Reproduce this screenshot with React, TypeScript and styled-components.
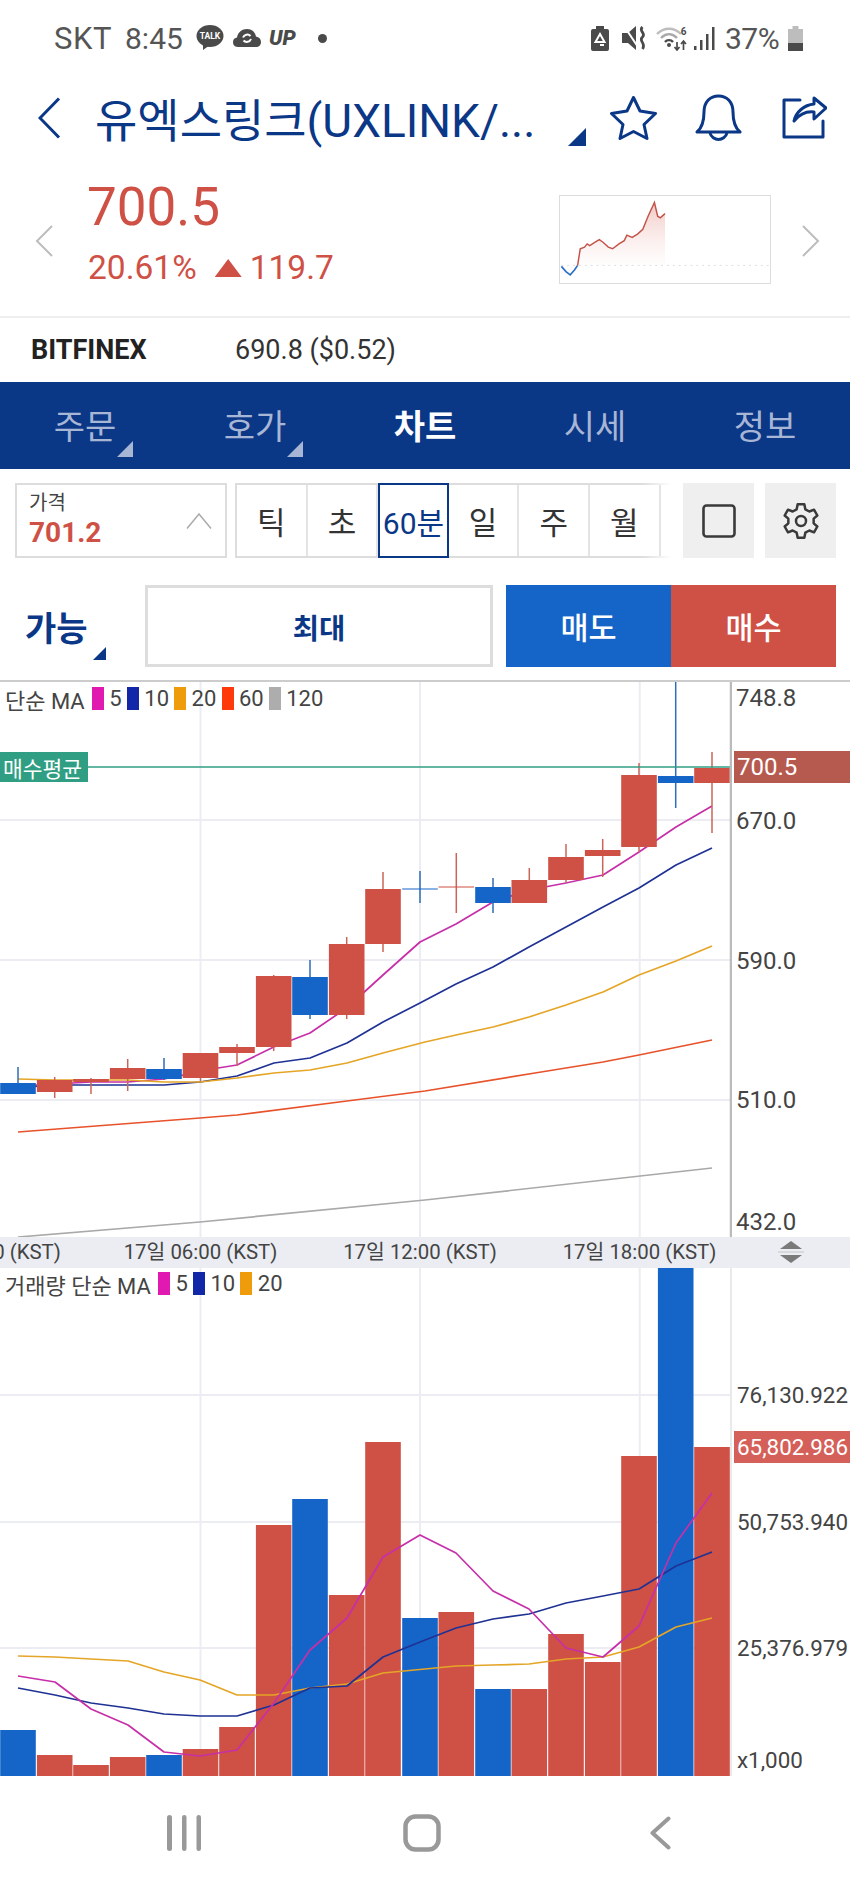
import React from "react";
import styled, { createGlobalStyle } from "styled-components";

const NAVY = "#0b3787";
const RED = "#cf5045";
const BLUE = "#1565c8";
const GRID = "#ebedf3";
const TEXT = "#444";

const GlobalStyle = createGlobalStyle`
    html, body {
        margin: 0;
        padding: 0;
        background: #fff;
    }
    * {
        box-sizing: border-box;
    }
    body {
        font-family: Roboto, "Noto Sans CJK KR", sans-serif;
    }
`;

type Candle = { x: number; top: number; bottom: number; high: number; low: number; up: boolean };

const CANDLES: Candle[] = [
    { x: 18, top: 1083, bottom: 1094, high: 1067, low: 1094, up: false },
    { x: 54.7, top: 1080, bottom: 1092, high: 1077, low: 1098, up: true },
    { x: 91, top: 1079, bottom: 1082, high: 1078, low: 1094, up: true },
    { x: 127.7, top: 1068, bottom: 1079, high: 1059, low: 1091, up: true },
    { x: 164, top: 1069, bottom: 1079, high: 1058, low: 1080, up: false },
    { x: 200.5, top: 1053, bottom: 1078, high: 1053, low: 1081, up: true },
    { x: 237, top: 1047, bottom: 1053, high: 1044, low: 1066, up: true },
    { x: 273.7, top: 976, bottom: 1047, high: 975, low: 1051, up: true },
    { x: 310, top: 977, bottom: 1015, high: 960, low: 1019, up: false },
    { x: 346.7, top: 944, bottom: 1015, high: 937, low: 1019, up: true },
    { x: 383, top: 889, bottom: 944, high: 872, low: 952, up: true },
    { x: 420, top: 888.5, bottom: 889.5, high: 871, low: 903, up: false },
    { x: 456.3, top: 886.5, bottom: 887.5, high: 853, low: 913, up: true },
    { x: 493, top: 887, bottom: 903, high: 878, low: 913, up: false },
    { x: 529.3, top: 880, bottom: 903, high: 868, low: 903, up: true },
    { x: 566, top: 857, bottom: 880, high: 844, low: 883, up: true },
    { x: 602.7, top: 850, bottom: 856, high: 839, low: 877, up: true },
    { x: 639, top: 775, bottom: 847, high: 763, low: 852, up: true },
    { x: 675.7, top: 776, bottom: 783, high: 682, low: 808, up: false },
    { x: 712, top: 768, bottom: 783, high: 752, low: 833, up: true },
];

const VOLUME_TOPS = [
    1730, 1755, 1765, 1757, 1755, 1749, 1727, 1525, 1499, 1595, 1442, 1618, 1612, 1689, 1689, 1634, 1662, 1456, 1268,
    1447,
];
const VOLUME_UP = [
    false, true, true, true, false, true, true, true, false, true, true, false, true, false, true, true, true, true,
    false, true,
];

const PRICE_LINES = [
    {
        color: "#c72fa8",
        points:
            "18,1086 54.7,1084 91,1082 127.7,1082 164,1079 218,1068 237,1065 273.7,1047 310,1033 346.7,1008 383,975 420,942 456,924 493,902 529,890 566,883 603,875 639,852 676,827 712,806",
    },
    {
        color: "#1f3294",
        points:
            "18,1087 73,1085 164,1085 200,1082 237,1076 274,1063 310,1058 347,1043 383,1022 420,1003 456,984 493,967 529,947 566,927 603,907 639,888 676,865 712,848",
    },
    {
        color: "#e5a526",
        points:
            "18,1079 55,1080 128,1080 164,1082 200,1082 237,1078 274,1073 310,1070 347,1063 383,1053 425,1042 456,1035 493,1027 529,1017 566,1005 603,992 639,975 676,961 712,946",
    },
    {
        color: "#e8522b",
        points: "18,1132 200,1118 237,1115 347,1101 425,1091 535,1073 603,1062 639,1055 712,1040",
    },
    { color: "#a9a9a9", points: "18,1237 200,1222 425,1200 712,1168" },
];

const VOLUME_LINES = [
    {
        color: "#e5a526",
        points:
            "18,1656 55,1657 91,1659 128,1661 164,1672 200,1680 237,1695 274,1695 310,1688 347,1684 383,1673 425,1669 456,1666 493,1665 529,1664 566,1659 603,1657 639,1647 676,1627 712,1618",
    },
    {
        color: "#1f3294",
        points:
            "18,1688 55,1695 91,1703 128,1708 164,1714 200,1716 237,1716 274,1705 310,1688 347,1686 383,1657 420,1642 456,1628 493,1619 529,1614 566,1603 603,1596 639,1589 676,1566 712,1552",
    },
    {
        color: "#c72fa8",
        points:
            "18,1676 55,1682 91,1709 128,1725 164,1752 200,1756 237,1750 274,1703 310,1650 347,1618 383,1557 420,1535 456,1553 493,1591 529,1609 566,1648 603,1657 639,1626 676,1543 712,1493",
    },
];

const PRICE_TOP = 682;
const VOLUME_TOP = 1268;

const PRICE_LABELS = [
    { text: "748.8", y: 698 },
    { text: "670.0", y: 821 },
    { text: "590.0", y: 961 },
    { text: "510.0", y: 1100 },
    { text: "432.0", y: 1222 },
];

const VOLUME_LABELS = [
    { text: "76,130.922", y: 1395 },
    { text: "50,753.940", y: 1522 },
    { text: "25,376.979", y: 1648 },
    { text: "x1,000", y: 1760 },
];

const TIME_LABELS = [
    { text: "17일 00:00 (KST)", x: -16 },
    { text: "17일 06:00 (KST)", x: 200.5 },
    { text: "17일 12:00 (KST)", x: 420 },
    { text: "17일 18:00 (KST)", x: 639.5 },
];

const INTERVALS = ["틱", "초", "60분", "일", "주", "월"];

const SPARK_BLUE = "0,72 4.7,77.3 9,80.7 13.4,75.7 16.6,71";
const SPARK_RED =
    "16.6,71 19.3,54 23.7,52.3 26.4,49 29,50.7 34.5,47.3 38.8,44.7 42.6,47.3 48,52.3 52.4,54 58.9,49 64.3,45.7 67,40 72.4,42.3 77.9,39 83.3,34 88.7,20.7 95.2,6.7 98.5,20.7 101.2,22.3 106,18";

const Grid: React.FC<{ rows: number[]; top: number; bottom: number }> = ({ rows, top, bottom }) => (
    <g stroke={GRID} strokeWidth="2">
        {[200.5, 420, 639.7].map((x) => (
            <line key={x} x1={x} x2={x} y1={top} y2={bottom} />
        ))}
        {rows.map((y) => (
            <line key={y} x1="0" x2="730" y1={y} y2={y} />
        ))}
    </g>
);

const Lines: React.FC<{ lines: { color: string; points: string }[] }> = ({ lines }) => (
    <g fill="none" strokeWidth="1.7" strokeLinejoin="round">
        {lines.map((l) => (
            <polyline key={l.color} points={l.points} stroke={l.color} />
        ))}
    </g>
);

const App: React.FC = () => (
    <Page>
        <GlobalStyle />
        <StatusBar>
            <Carrier>SKT</Carrier>
            <Clock>8:45</Clock>
            <svg width="28" height="26" viewBox="0 0 28 26">
                <ellipse cx="14" cy="11" rx="13.5" ry="11" fill="#4a4a4a" />
                <path d="M7 18 L7 25 L14 20 Z" fill="#4a4a4a" />
                <text x="14" y="14" fontSize="8.5" fontWeight="700" textAnchor="middle" fill="#fff" fontFamily="Roboto">
                    TALK
                </text>
            </svg>
            <CloudIcon width="28" height="18" viewBox="0 0 28 18">
                <path
                    d="M5 18 C1 18 0 15 0 13 C0 10 2 9 4 8.500 C5 3 9 0 14 0 C19 0 22 3 23 7.500 C26 8 28 10 28 13 C28 16 26 18 23 18 Z"
                    fill="#4a4a4a"
                />
                <path d="M10 8.500 A4.500 4.500 0 0 1 17.500 7 M18 10 A4.500 4.500 0 0 1 10.500 11.500" stroke="#fff" strokeWidth="2" fill="none" />
            </CloudIcon>
            <UpMark>UP</UpMark>
            <StatusDot />
            <StatusRight>
                <svg width="18" height="25" viewBox="0 0 18 25">
                    <path d="M5 0 H13 V3 H16 Q18 3 18 5 V23 Q18 25 16 25 H2 Q0 25 0 23 V5 Q0 3 2 3 H5 Z" fill="#4a4a4a" />
                    <path d="M9 8 L13.500 16 H4.500 Z" fill="none" stroke="#fff" strokeWidth="2" />
                    <path d="M9 19 H13" stroke="#fff" strokeWidth="2" />
                </svg>
                <MuteIcon width="25" height="24" viewBox="0 0 25 24">
                    <path d="M0 7 H6 L14 0 V24 L6 17 H0 Z" fill="#4a4a4a" />
                    <path d="M2 0 L16 21" stroke="#fff" strokeWidth="2" />
                    <path d="M20.500 1 C16 5 24.500 7 20.500 11 C16 15 24.500 17 20.500 23" stroke="#4a4a4a" strokeWidth="2.800" fill="none" />
                </MuteIcon>
                <WifiIcon width="32" height="25" viewBox="0 0 32 25">
                    <path d="M1 8 C8 1 18 1 25 8" stroke="#bdbdbd" strokeWidth="2.400" fill="none" />
                    <path d="M5 12 C10 7 16 7 21 12" stroke="#a9a9a9" strokeWidth="2.400" fill="none" />
                    <path d="M9 16 C11 13.500 15 13.500 17 16" stroke="#4a4a4a" strokeWidth="2.400" fill="none" />
                    <circle cx="13" cy="19" r="2" fill="#4a4a4a" />
                    <path d="M21 16 V24 M18.500 21 L21 24 L23.500 21" stroke="#4a4a4a" strokeWidth="1.700" fill="none" />
                    <path d="M27.500 24 V15 M25 18 L27.500 15 L30 18" stroke="#4a4a4a" strokeWidth="1.700" fill="none" />
                    <text x="27.500" y="9" fontSize="10" fontWeight="700" textAnchor="middle" fill="#4a4a4a" fontFamily="Roboto">
                        6
                    </text>
                </WifiIcon>
                <SignalBars width="21" height="24" viewBox="0 0 21 24">
                    <rect x="0" y="20" width="2.500" height="4" fill="#4a4a4a" />
                    <rect x="6" y="14" width="2.500" height="10" fill="#4a4a4a" />
                    <rect x="12" y="8" width="2.500" height="16" fill="#4a4a4a" />
                    <rect x="18" y="1" width="2.500" height="23" fill="#4a4a4a" />
                </SignalBars>
                <BatteryText>37%</BatteryText>
                <BatteryIcon width="15" height="25" viewBox="0 0 15 25">
                    <path d="M4.500 0 H10.500 V3 H15 V25 H0 V3 H4.500 Z" fill="#bdbdbd" />
                    <rect x="0" y="17" width="15" height="8" fill="#4a4a4a" />
                </BatteryIcon>
            </StatusRight>
        </StatusBar>

        <Header>
            <svg width="23" height="42" viewBox="0 0 23 42">
                <path d="M21 1.500 L2 21 L21 40.500" fill="none" stroke={NAVY} strokeWidth="3" />
            </svg>
            <Title>유엑스링크(UXLINK/...</Title>
            <TitleCorner />
            <StarIcon width="47" height="44" viewBox="0 0 47 44">
                <path
                    d="M23.500 1.500 L30 15 L45.500 17.500 L34 28.500 L37 42.500 L23.500 35.500 L10 42.500 L13 28.500 L1.500 17.500 L17 15 Z"
                    fill="none"
                    stroke={NAVY}
                    strokeWidth="3"
                    strokeLinejoin="round"
                />
            </StarIcon>
            <BellIcon width="47" height="47" viewBox="0 0 47 47">
                <path
                    d="M2 38 C8 33 9 26 9 18 C9 8 15 2 23.500 2 C32 2 38 8 38 18 C38 26 39 33 45 38 Z"
                    fill="none"
                    stroke={NAVY}
                    strokeWidth="3"
                    strokeLinejoin="round"
                />
                <path d="M15 39 C16 43 20 45.500 23.500 45.500 C27 45.500 31 43 32 39" fill="none" stroke={NAVY} strokeWidth="3" />
            </BellIcon>
            <ShareIcon width="46" height="43" viewBox="0 0 46 43">
                <path d="M19 4 H3 V41 H42 V25" fill="none" stroke={NAVY} strokeWidth="3" strokeLinecap="round" strokeLinejoin="round" />
                <path
                    d="M13 25 C15 16 23 9 33 8 V2 L45 12 L33 23 V16 C25 15 18 19 13 25 Z"
                    fill="none"
                    stroke={NAVY}
                    strokeWidth="3"
                    strokeLinejoin="round"
                />
            </ShareIcon>
        </Header>

        <Quote>
            <SideChevron width="18" height="32" viewBox="0 0 18 32">
                <path d="M17 1 L2 16 L17 31" fill="none" stroke="#bdbdbd" strokeWidth="2" />
            </SideChevron>
            <QuoteText>
                <PriceValue>700.5</PriceValue>
                <ChangeRow>
                    <span>20.61%</span>
                    <UpTriangle />
                    <span>119.7</span>
                </ChangeRow>
            </QuoteText>
            <Spark width="212" height="89" viewBox="0 0 212 89">
                <defs>
                    <linearGradient id="sparkFill" x1="0" x2="0" y1="0" y2="1">
                        <stop offset="0" stopColor="#e9a49c" stopOpacity="0.6" />
                        <stop offset="1" stopColor="#f4d8d4" stopOpacity="0.05" />
                    </linearGradient>
                </defs>
                <polygon points={`${SPARK_RED} 106,71`} fill="url(#sparkFill)" />
                <line x1="0" x2="212" y1="71" y2="71" stroke="#ddd" strokeWidth="1" strokeDasharray="2 4" />
                <polyline points={SPARK_BLUE} fill="none" stroke="#2d6fc4" strokeWidth="1.700" />
                <polyline points={SPARK_RED} fill="none" stroke="#c4544a" strokeWidth="1.500" />
            </Spark>
            <SideChevron width="18" height="32" viewBox="0 0 18 32">
                <path d="M1 1 L16 16 L1 31" fill="none" stroke="#bdbdbd" strokeWidth="2" />
            </SideChevron>
        </Quote>

        <ExchangeRow>
            <ExchangeName>BITFINEX</ExchangeName>
            <ExchangePrice>690.8 ($0.52)</ExchangePrice>
        </ExchangeRow>

        <Tabs>
            <Tab>
                주문
                <TabCorner />
            </Tab>
            <Tab>
                호가
                <TabCorner />
            </Tab>
            <Tab $active>차트</Tab>
            <Tab>시세</Tab>
            <Tab>정보</Tab>
        </Tabs>

        <Toolbar>
            <PriceBox>
                <PriceCaption>가격</PriceCaption>
                <PriceInput>701.2</PriceInput>
                <PriceCaret width="26" height="16" viewBox="0 0 26 16">
                    <path d="M1 15.500 L13 1 L25 15.500" fill="none" stroke="#aaa" strokeWidth="1.500" />
                </PriceCaret>
            </PriceBox>
            <Intervals>
                {INTERVALS.map((label) => (
                    <IntervalCell key={label} $active={label === "60분"}>
                        {label}
                    </IntervalCell>
                ))}
            </Intervals>
            <ToolButton>
                <svg width="34" height="34" viewBox="0 0 34 34">
                    <rect x="1.500" y="1.500" width="31" height="31" rx="3" fill="none" stroke="#3a3a3a" strokeWidth="2.600" />
                </svg>
            </ToolButton>
            <ToolButton>
                <svg width="40" height="40" viewBox="0 0 24 24" fill="none" stroke="#3a3a3a" strokeWidth="1.500" strokeLinejoin="round">
                    <path d="M10 2 H14 L14.600 5 L17 6.300 L19.800 5.200 L21.800 8.700 L19.600 10.600 V13.400 L21.800 15.300 L19.800 18.800 L17 17.700 L14.600 19 L14 22 H10 L9.400 19 L7 17.700 L4.200 18.800 L2.200 15.300 L4.400 13.400 V10.600 L2.200 8.700 L4.200 5.200 L7 6.300 L9.400 5 Z" />
                    <circle cx="12" cy="12" r="3" />
                </svg>
            </ToolButton>
        </Toolbar>

        <TradeRow>
            <AvailableLabel>
                가능
                <AvailableCorner />
            </AvailableLabel>
            <MaxButton>최대</MaxButton>
            <OrderButton $color={BLUE}>매도</OrderButton>
            <OrderButton $color={RED}>매수</OrderButton>
        </TradeRow>

        <PricePane>
            <ChartSvg width="732" height="555" viewBox={`0 ${PRICE_TOP} 732 555`}>
                <Grid rows={[820, 960, 1100]} top={PRICE_TOP} bottom={1237} />
                <Lines lines={PRICE_LINES} />
                {CANDLES.map((c) => {
                    const color = c.up ? RED : BLUE;
                    return (
                        <g key={c.x}>
                            <line x1={c.x} x2={c.x} y1={c.high} y2={c.low} stroke={c.up ? "#c9645a" : "#2e6db8"} strokeWidth="1.500" />
                            <rect x={c.x - 17.8} y={c.top} width="35.600" height={c.bottom - c.top} fill={color} />
                        </g>
                    );
                })}
                <line x1="0" x2="730" y1="767" y2="767" stroke="#2f9e83" strokeWidth="1.500" />
                <line x1="731" x2="731" y1={PRICE_TOP} y2="1237" stroke="#bbb" strokeWidth="2.500" />
            </ChartSvg>
            <Legend $top={5}>
                <LegendName>단순 MA</LegendName>
                <Swatch $color="#e019b0" />
                <span>5</span>
                <Swatch $color="#1226a8" />
                <span>10</span>
                <Swatch $color="#ee9c0c" />
                <span>20</span>
                <Swatch $color="#ff3a0a" />
                <span>60</span>
                <Swatch $color="#adadad" />
                <span>120</span>
            </Legend>
            <AvgTag>매수평균</AvgTag>
            {PRICE_LABELS.map((l) => (
                <AxisLabel key={l.text} $y={l.y - PRICE_TOP}>
                    {l.text}
                </AxisLabel>
            ))}
            <AxisTag $y={767 - PRICE_TOP} $color="#b65a50">
                700.5
            </AxisTag>
        </PricePane>

        <TimeAxis>
            {TIME_LABELS.map((l) => (
                <TimeLabel key={l.text} $x={l.x}>
                    {l.text}
                </TimeLabel>
            ))}
            <ResizeHandle width="26" height="22" viewBox="0 0 26 22">
                <path d="M13 0 L24 8 H2 Z" fill="#7a7a7a" />
                <path d="M2 14 H24 L13 22 Z" fill="#7a7a7a" />
                <line x1="0" x2="26" y1="11" y2="11" stroke="#c4c4c4" strokeWidth="1" />
            </ResizeHandle>
        </TimeAxis>

        <VolumePane>
            <ChartSvg width="732" height="508" viewBox={`0 ${VOLUME_TOP} 732 508`}>
                <Grid rows={[1395, 1522, 1648]} top={VOLUME_TOP} bottom={1776} />
                <line x1="731" x2="731" y1={VOLUME_TOP} y2="1776" stroke="#e9e9e9" strokeWidth="2" />
                {VOLUME_TOPS.map((top, i) => (
                    <rect
                        key={CANDLES[i].x}
                        x={CANDLES[i].x - 17.8}
                        y={top}
                        width="35.600"
                        height={1776 - top}
                        fill={VOLUME_UP[i] ? RED : BLUE}
                    />
                ))}
                <Lines lines={VOLUME_LINES} />
            </ChartSvg>
            <Legend $top={4}>
                <LegendName>거래량 단순 MA</LegendName>
                <Swatch $color="#e019b0" />
                <span>5</span>
                <Swatch $color="#1226a8" />
                <span>10</span>
                <Swatch $color="#ee9c0c" />
                <span>20</span>
            </Legend>
            {VOLUME_LABELS.map((l) => (
                <VolumeLabel key={l.text} $y={l.y - VOLUME_TOP}>
                    {l.text}
                </VolumeLabel>
            ))}
            <VolumeTag $y={1446.5 - VOLUME_TOP} $color="#d5605a">
                65,802.986
            </VolumeTag>
        </VolumePane>

        <NavBar>
            <svg width="34" height="36" viewBox="0 0 34 36">
                <rect x="0" y="0" width="5" height="36" rx="2.500" fill="#999" />
                <rect x="15" y="0" width="4.500" height="36" rx="2.250" fill="#999" />
                <rect x="29.500" y="0" width="4.500" height="36" rx="2.250" fill="#999" />
            </svg>
            <svg width="38" height="38" viewBox="0 0 38 38">
                <rect x="2.500" y="2.500" width="33" height="33" rx="10" fill="none" stroke="#999" strokeWidth="4.500" />
            </svg>
            <svg width="22" height="34" viewBox="0 0 22 34">
                <path d="M19.500 2.500 L3.500 17 L19.500 31.500" fill="none" stroke="#999" strokeWidth="4" strokeLinecap="round" strokeLinejoin="round" />
            </svg>
        </NavBar>
    </Page>
);

const Page = styled.div`
    width: 850px;
    height: 1889px;
    overflow: hidden;
    background: #fff;
    display: flex;
    flex-direction: column;
`;

const StatusBar = styled.div`
    height: 68px;
    padding: 8px 0 0 54px;
    display: flex;
    align-items: center;
    color: #555;
    font-size: 30px;
`;

const Carrier = styled.span`
    width: 71px;
    font-size: 31px;
    letter-spacing: 0.6px;
`;

const Clock = styled.span`
    width: 71px;
`;

const CloudIcon = styled.svg`
    margin-left: 9px;
`;

const UpMark = styled.span`
    margin-left: 8px;
    width: 28px;
    font-size: 21px;
    font-weight: 900;
    font-style: italic;
    color: #4a4a4a;
`;

const StatusDot = styled.span`
    width: 9px;
    height: 9px;
    margin-left: 21px;
    border-radius: 50%;
    background: #4a4a4a;
`;

const StatusRight = styled.div`
    margin-left: 264px;
    display: flex;
    align-items: center;
`;

const MuteIcon = styled.svg`
    margin-left: 13px;
`;

const WifiIcon = styled.svg`
    margin-left: 9px;
`;

const SignalBars = styled.svg`
    margin-left: 6px;
`;

const BatteryText = styled.span`
    margin-left: 10px;
    width: 56px;
    font-size: 30px;
    letter-spacing: -0.5px;
`;

const BatteryIcon = styled.svg`
    margin-left: 7px;
`;

const Header = styled.div`
    height: 99px;
    padding-left: 38px;
    display: flex;
    align-items: center;
`;

const Title = styled.div`
    width: 472px;
    margin-left: 34px;
    padding-bottom: 2px;
    font-size: 46px;
    color: ${NAVY};
    white-space: nowrap;
`;

const TitleCorner = styled.span`
    width: 18px;
    height: 18px;
    align-self: flex-end;
    margin: 0 0 21px 1px;
    background: ${NAVY};
    clip-path: polygon(100% 0, 100% 100%, 0 100%);
`;

const StarIcon = styled.svg`
    margin-left: 24px;
`;

const BellIcon = styled.svg`
    margin-left: 38px;
`;

const ShareIcon = styled.svg`
    margin-left: 39px;
`;

const Quote = styled.div`
    height: 149px;
    padding-left: 35px;
    display: flex;
    align-items: flex-start;
`;

const SideChevron = styled.svg`
    margin-top: 58px;
    flex: none;
`;

const QuoteText = styled.div`
    width: 471px;
    margin-left: 34px;
    padding-top: 10px;
    color: ${RED};
`;

const PriceValue = styled.div`
    font-size: 53px;
    line-height: 60px;
`;

const ChangeRow = styled.div`
    margin-top: 12px;
    padding-left: 1px;
    display: flex;
    align-items: center;
    font-size: 33.5px;
    line-height: 38px;
`;

const UpTriangle = styled.span`
    width: 27px;
    height: 18px;
    margin: 0 8px 0 18px;
    background: ${RED};
    clip-path: polygon(50% 0, 100% 100%, 0 100%);
`;

const Spark = styled.svg`
    margin: 28px 31px 0 1px;
    border: 1px solid #ddd;
    flex: none;
`;

const ExchangeRow = styled.div`
    height: 66px;
    padding-left: 31px;
    border-top: 2px solid #eee;
    display: flex;
    align-items: center;
    font-size: 27px;
    color: #333;
`;

const ExchangeName = styled.span`
    width: 204px;
    font-weight: 700;
    color: #222;
`;

const ExchangePrice = styled.span`
    font-size: 27px;
`;

const Tabs = styled.div`
    height: 87px;
    background: ${NAVY};
    display: grid;
    grid-template-columns: repeat(5, 170px);
`;

const Tab = styled.div<{ $active?: boolean }>`
    position: relative;
    padding-bottom: 2px;
    display: flex;
    align-items: center;
    justify-content: center;
    font-size: 34px;
    font-weight: ${(p) => (p.$active ? 700 : 400)};
    color: ${(p) => (p.$active ? "#fff" : "#a8b6d6")};
`;

const TabCorner = styled.span`
    position: absolute;
    right: 37px;
    bottom: 12px;
    width: 16px;
    height: 16px;
    background: #a8b6d6;
    clip-path: polygon(100% 0, 100% 100%, 0 100%);
`;

const Toolbar = styled.div`
    padding: 14px 14px 0 15px;
    display: flex;
    align-items: stretch;
`;

const PriceBox = styled.div`
    position: relative;
    width: 212px;
    height: 75px;
    padding: 5px 0 0 12px;
    border: 2px solid #ddd;
`;

const PriceCaption = styled.div`
    font-size: 20px;
    line-height: 27px;
    color: #444;
`;

const PriceInput = styled.div`
    font-size: 28px;
    line-height: 32px;
    font-weight: 700;
    color: ${RED};
`;

const PriceCaret = styled.svg`
    position: absolute;
    right: 13px;
    top: 28px;
`;

const Intervals = styled.div`
    position: relative;
    width: 437px;
    height: 75px;
    margin-left: 8px;
    padding-right: 11px;
    display: flex;
    border: 2px solid #ddd;
    border-right: none;

    &::after {
        content: "";
        position: absolute;
        top: -2px;
        bottom: -2px;
        right: 0;
        width: 30px;
        background: linear-gradient(to right, rgba(255, 255, 255, 0), #fff);
    }
`;

const IntervalCell = styled.div<{ $active?: boolean }>`
    width: 70.6px;
    flex: none;
    display: flex;
    align-items: center;
    justify-content: center;
    font-size: ${(p) => (p.$active ? "30px" : "31px")};
    white-space: nowrap;
    color: ${(p) => (p.$active ? NAVY : "#333")};
    border-right: 2px solid #e4e4e4;
    margin: ${(p) => (p.$active ? "-2px 0" : "0")};
    border: ${(p) => (p.$active ? `2px solid ${NAVY}` : "")};
    position: relative;
    z-index: 1;
`;

const ToolButton = styled.div`
    width: 71px;
    height: 75px;
    margin-left: 11px;
    background: #efefef;
    display: flex;
    align-items: center;
    justify-content: center;
`;

const TradeRow = styled.div`
    height: 82px;
    margin-top: 27px;
    padding-left: 25px;
    display: flex;
`;

const AvailableLabel = styled.div`
    position: relative;
    width: 120px;
    display: flex;
    align-items: center;
    font-size: 34px;
    font-weight: 700;
    color: ${NAVY};
`;

const AvailableCorner = styled.span`
    position: absolute;
    left: 68px;
    bottom: 7px;
    width: 13px;
    height: 13px;
    background: ${NAVY};
    clip-path: polygon(100% 0, 100% 100%, 0 100%);
`;

const MaxButton = styled.div`
    width: 348px;
    margin-right: 13px;
    border: 3px solid #ddd;
    display: flex;
    align-items: center;
    justify-content: center;
    font-size: 28.5px;
    font-weight: 700;
    color: ${NAVY};
`;

const OrderButton = styled.div<{ $color: string }>`
    width: 165px;
    background: ${(p) => p.$color};
    display: flex;
    align-items: center;
    justify-content: center;
    font-size: 30.5px;
    font-weight: 500;
    color: #fff;
`;

const PricePane = styled.div`
    position: relative;
    height: 557px;
    margin-top: 13px;
    border-top: 2px solid #ccc;
    overflow: hidden;
`;

const VolumePane = styled.div`
    position: relative;
    height: 508px;
    overflow: hidden;
`;

const ChartSvg = styled.svg`
    display: block;
`;

const Legend = styled.div<{ $top: number }>`
    position: absolute;
    top: ${(p) => p.$top}px;
    left: 5px;
    height: 23px;
    display: flex;
    align-items: center;
    gap: 5.3px;
    font-size: 22px;
    color: ${TEXT};
`;

const LegendName = styled.span`
    margin-right: 2px;
    white-space: nowrap;
`;

const Swatch = styled.span<{ $color: string }>`
    width: 12px;
    height: 23px;
    background: ${(p) => p.$color};
`;

const AvgTag = styled.div`
    position: absolute;
    left: 0;
    top: 70px;
    width: 88px;
    height: 30px;
    padding-left: 3px;
    display: flex;
    align-items: center;
    background: #2f9e83;
    color: #fff;
    font-size: 21.5px;
    white-space: nowrap;
`;

const AxisLabel = styled.div<{ $y: number }>`
    position: absolute;
    left: 736px;
    top: ${(p) => p.$y - 15}px;
    height: 30px;
    line-height: 30px;
    font-size: 24px;
    color: ${TEXT};
`;

const VolumeLabel = styled(AxisLabel)`
    left: 737px;
    font-size: 22.4px;
`;

const AxisTag = styled(AxisLabel)<{ $color: string }>`
    left: 734px;
    width: 116px;
    top: ${(p) => p.$y - 16}px;
    height: 32px;
    line-height: 32px;
    padding-left: 3px;
    background: ${(p) => p.$color};
    color: #fff;
`;

const VolumeTag = styled(AxisTag)`
    font-size: 22.4px;
`;

const TimeAxis = styled.div`
    position: relative;
    height: 31px;
    background: ${GRID};
    overflow: hidden;
`;

const TimeLabel = styled.span<{ $x: number }>`
    position: absolute;
    left: ${(p) => p.$x}px;
    top: 0;
    transform: translateX(-50%);
    font-size: 20.4px;
    line-height: 31px;
    color: ${TEXT};
    white-space: nowrap;
`;

const ResizeHandle = styled.svg`
    position: absolute;
    left: 778px;
    top: 4px;
`;

const NavBar = styled.div`
    height: 113px;
    padding-left: 65px;
    display: grid;
    grid-template-columns: repeat(3, 238px);
    align-items: center;
    justify-items: center;
`;

export default App;
